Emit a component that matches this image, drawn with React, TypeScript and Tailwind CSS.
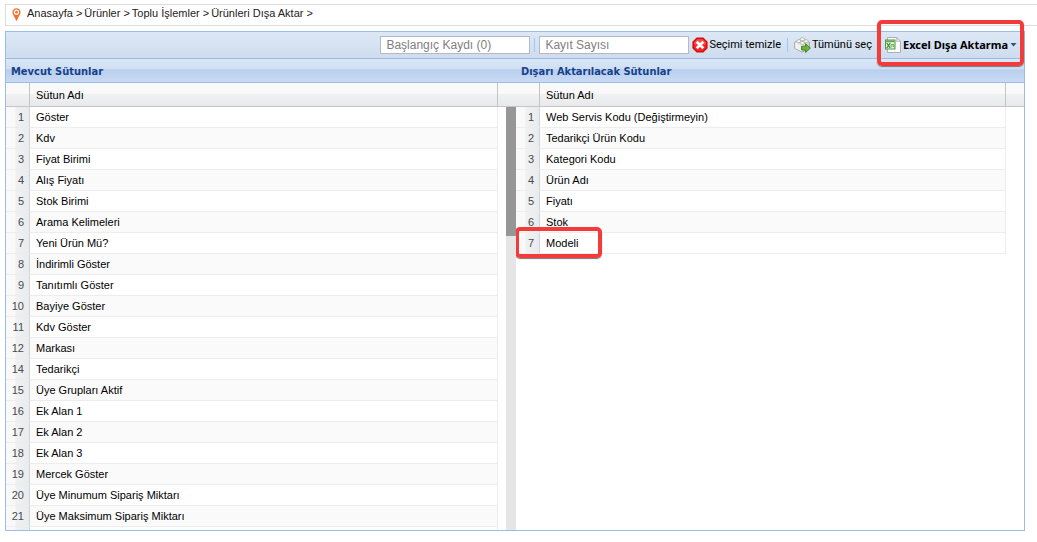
import React from "react";

type Column = { no: number; name: string };

const available: Column[] = [
  { no: 1, name: "Göster" },
  { no: 2, name: "Kdv" },
  { no: 3, name: "Fiyat Birimi" },
  { no: 4, name: "Alış Fiyatı" },
  { no: 5, name: "Stok Birimi" },
  { no: 6, name: "Arama Kelimeleri" },
  { no: 7, name: "Yeni Ürün Mü?" },
  { no: 8, name: "İndirimli Göster" },
  { no: 9, name: "Tanıtımlı Göster" },
  { no: 10, name: "Bayiye Göster" },
  { no: 11, name: "Kdv Göster" },
  { no: 12, name: "Markası" },
  { no: 14, name: "Tedarikçi" },
  { no: 15, name: "Üye Grupları Aktif" },
  { no: 16, name: "Ek Alan 1" },
  { no: 17, name: "Ek Alan 2" },
  { no: 18, name: "Ek Alan 3" },
  { no: 19, name: "Mercek Göster" },
  { no: 20, name: "Üye Minumum Sipariş Miktarı" },
  { no: 21, name: "Üye Maksimum Sipariş Miktarı" },
];

const exported: Column[] = [
  { no: 1, name: "Web Servis Kodu (Değiştirmeyin)" },
  { no: 2, name: "Tedarikçi Ürün Kodu" },
  { no: 3, name: "Kategori Kodu" },
  { no: 4, name: "Ürün Adı" },
  { no: 5, name: "Fiyatı" },
  { no: 6, name: "Stok" },
  { no: 7, name: "Modeli" },
];

const crumbs = ["Anasayfa", "Ürünler", "Toplu İşlemler", "Ürünleri Dışa Aktar"];

function PinIcon() {
  return (
    <svg width="9" height="13" viewBox="0 0 9 13" aria-hidden="true">
      <path d="M4.500 .3C2 .3.4 2.100.4 4.300c0 2.400 2.400 4.600 3.200 7.300.2.8.4 1.200.9 1.200s.7-.4.9-1.200c.8-2.700 3.200-4.900 3.200-7.300C8.600 2.100 7 .3 4.500 .3z" fill="#f0722c" />
      <circle cx="4.500" cy="4.200" r="2.600" fill="#fff" />
      <circle cx="4.500" cy="4.200" r="1.400" fill="#f0722c" />
    </svg>
  );
}

function ClearIcon() {
  return (
    <svg width="16" height="16" viewBox="0 0 16 16" aria-hidden="true">
      <path d="M5 1.200h6l3.800 3.800v6L11 14.800H5L1.200 11V5z" fill="#fa2323" stroke="#d31010" strokeWidth="1.600" strokeLinejoin="round" />
      <path d="M5.300 2.200h5.400L13.800 5.300v2.200H2.200V5.300z" fill="#ff6a62" opacity=".55" />
      <path d="M4.700 4.700l6.600 6.600M11.300 4.700l-6.600 6.600" stroke="#fff" strokeWidth="2.700" />
    </svg>
  );
}

function SelectAllIcon() {
  return (
    <svg width="17" height="16" viewBox="0 0 17 16" aria-hidden="true">
      <path d="M.8 5.200L8 2l7.300 3v6.500L8 15 .8 11.300z" fill="#dededb" stroke="#96968f" strokeWidth=".9" strokeLinejoin="round" />
      <path d="M1.200 5.400L8 8.400v6.200l-6.800-3.400z" fill="#f1f1ef" />
      <ellipse cx="4.800" cy="4.200" rx="2.200" ry="1.500" fill="#f8f8f6" stroke="#a5a59e" strokeWidth=".7" />
      <ellipse cx="8.300" cy="2.200" rx="2.200" ry="1.500" fill="#f8f8f6" stroke="#a5a59e" strokeWidth=".7" />
      <ellipse cx="8.300" cy="6" rx="2.200" ry="1.500" fill="#f8f8f6" stroke="#a5a59e" strokeWidth=".7" />
      <ellipse cx="12" cy="4.200" rx="2.200" ry="1.500" fill="#f8f8f6" stroke="#a5a59e" strokeWidth=".7" />
      <path d="M7.500 9.300h4V6.600l4.900 4.500-4.900 4.500V13h-4z" fill="#68b540" stroke="#38801f" strokeWidth=".9" strokeLinejoin="round" />
    </svg>
  );
}

function ExcelIcon() {
  return (
    <svg width="16" height="16" viewBox="0 0 16 16" aria-hidden="true">
      <path d="M2.500 .5h9.200l3.800 3.800v11.200h-13z" fill="#fcfcfc" stroke="#a9afb8" />
      <path d="M11.500 .8v3.700h3.700z" fill="#e2e6ea" stroke="#a9afb8" strokeWidth=".6" />
      <rect x=".5" y="3" width="9.500" height="9" fill="#eaf4e4" stroke="#4e9a3f" />
      <path d="M1 3.500h8.500v1.700H1z" fill="#5ba74b" />
      <path d="M1.800 6l3.400 5M5.200 6l-3.400 5" stroke="#3c8a30" strokeWidth="1.300" />
      <path d="M6 10.500V7.500h3M6.500 9h2.500M9 7.500v3" stroke="#67ad57" strokeWidth=".9" fill="none" />
    </svg>
  );
}

function Separator() {
  return <span className="h-3.5 w-px bg-[#98c8ff]" aria-hidden="true" />;
}

function Highlight({ className }: { className: string }) {
  return (
    <span
      aria-hidden="true"
      className={`pointer-events-none absolute z-10 rounded-[5px] border-4 border-[#f23c3c] shadow-[0_1px_1px_#777] ${className}`}
    />
  );
}

const headCell = "h-6 border-b border-[#c5c5c5] p-0 text-left font-normal";

function ColumnTable({
  title,
  rows,
  scrollable = false,
  marked,
}: {
  title: string;
  rows: Column[];
  scrollable?: boolean;
  marked?: number;
}) {
  const cell = "h-[21px] border-b border-[#ededed] p-0";
  return (
    <section className="flex min-h-0 min-w-0 flex-col">
      <h2 className="h-[25px] shrink-0 border-y border-[#99bce8] bg-[linear-gradient(#dbe7f6,#cfdef2_45%,#b8cfee_46%,#c9daf3)] px-[5px] font-['DejaVu_Sans_Condensed','DejaVu_Sans',sans-serif] text-[11px] leading-[25px] font-bold text-[#15428b]">
        {title}
      </h2>
      <div className="relative min-h-0 flex-1">
        <div className="h-full overflow-hidden">
          <table className="w-full table-fixed border-separate border-spacing-0 text-[11px] leading-5 text-black">
            <colgroup>
              <col className="w-6" />
              <col />
              <col className="w-[18px]" />
            </colgroup>
            <thead className="bg-[linear-gradient(#f9f9f9_45%,#f0f1f2_46%,#e8e9eb)]">
              <tr>
                <th className={`${headCell} border-r`} aria-label="No" />
                <th className={`${headCell} border-r pl-1.5`}>Sütun Adı</th>
                <td className={headCell} />
              </tr>
            </thead>
            <tbody>
              {rows.map((row) => (
                <tr key={row.no} className="odd:bg-white even:bg-[#fafafa]">
                  <td className={`${cell} border-r border-r-[#d4d4d4] bg-[linear-gradient(90deg,#f9f9f9_40%,#eff1f3_42%,#e9ebee)] pr-[5px] text-right text-[#4a4a4a]`}>
                    {row.no}
                  </td>
                  <td className={`${cell} relative border-r border-r-[#ededed] pl-1.5`}>
                    {row.name}
                    {marked === row.no && <Highlight className="-top-1.5 -left-[25px] h-[31px] w-[87px]" />}
                  </td>
                  <td className="bg-white p-0" />
                </tr>
              ))}
              {scrollable && (
                <tr aria-hidden="true">
                  <td className="h-[21px] border-r border-[#d4d4d4] bg-[linear-gradient(90deg,#f9f9f9_40%,#eff1f3_42%,#e9ebee)]" />
                  <td className="border-r border-[#ededed]" />
                  <td />
                </tr>
              )}
            </tbody>
          </table>
        </div>
        {scrollable && (
          <div className="absolute top-6 right-0 bottom-0 w-2.5 bg-[#e5e5e5]">
            <div className="h-[30.5%] bg-[#969696]" />
          </div>
        )}
      </div>
    </section>
  );
}

const inputClass =
  "h-[18px] w-[150px] border border-[#b5b8c8] bg-white px-[5px] text-[12px] text-black outline-none placeholder:text-[#808080]";
const buttonClass = "flex items-center whitespace-nowrap";

export default function App() {
  return (
    <div className="flex h-screen flex-col gap-[5px] bg-white pt-1 pb-[11px] pl-[5px] font-['Liberation_Sans',Arial,sans-serif]">
      <nav aria-label="Konum" className="flex h-[22px] shrink-0 items-center border border-r-0 border-[#dcdcdc] pb-0.5 pl-1.5">
        <PinIcon />
        <ol className="flex gap-0.5 pb-0.5 pl-1.5 text-[11px] leading-4 text-[#222]">
          {crumbs.map((crumb) => (
            <li key={crumb} className="flex gap-[3px]">
              <a href="#">{crumb}</a>
              <span>&gt;</span>
            </li>
          ))}
        </ol>
      </nav>

      <main className="mr-3 flex min-h-0 flex-1 flex-col border border-[#99bce8]">
        <div className="flex h-[26px] shrink-0 items-center justify-end bg-[linear-gradient(#dde8f5,#cedcee)] pr-[7px] font-[Roboto,sans-serif] text-[11px] text-black">
          <div className="flex items-center gap-1 font-['Liberation_Sans',Arial,sans-serif]">
            <input type="text" aria-label="Başlangıç Kaydı (0)" placeholder="Başlangıç Kaydı (0)" className={inputClass} />
            <Separator />
            <input type="text" aria-label="Kayıt Sayısı" placeholder="Kayıt Sayısı" className={inputClass} />
          </div>
          <div className="flex items-center gap-1.5 pl-[3px]">
            <button type="button" className={`${buttonClass} gap-px`}>
              <ClearIcon />
              Seçimi temizle
            </button>
            <Separator />
            <button type="button" className={`${buttonClass} gap-px`}>
              <SelectAllIcon />
              Tümünü seç
            </button>
            <Separator />
            <button
              type="button"
              className={`${buttonClass} relative gap-0.5 font-['Noto_Sans',sans-serif] font-bold`}
            >
              <ExcelIcon />
              Excel Dışa Aktarma
              <svg width="7" height="4" viewBox="0 0 7 4" aria-hidden="true">
                <path d="M.5 0h6l-3 3.500z" fill="#2d5386" />
              </svg>
              <Highlight className="-top-[17px] -right-[7px] -bottom-[13px] -left-2" />
            </button>
          </div>
        </div>

        <div className="grid min-h-0 flex-1 grid-cols-[510fr_508fr] grid-rows-[minmax(0,1fr)]">
          <ColumnTable title="Mevcut Sütunlar" rows={available} scrollable />
          <ColumnTable title="Dışarı Aktarılacak Sütunlar" rows={exported} marked={7} />
        </div>
      </main>
    </div>
  );
}
